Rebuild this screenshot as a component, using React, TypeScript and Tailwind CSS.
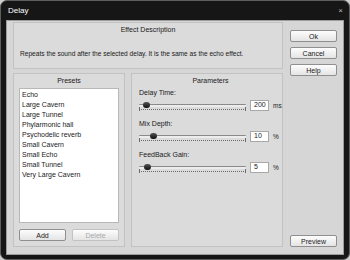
import React from "react";

const presets = [
  "Echo",
  "Large Cavern",
  "Large Tunnel",
  "Phylarmonic hall",
  "Psychodelic reverb",
  "Small Cavern",
  "Small Echo",
  "Small Tunnel",
  "Very Large Cavern",
];

const params = [
  { label: "Delay Time:", value: "200", unit: "ms", pos: 4 },
  { label: "Mix Depth:", value: "10", unit: "%", pos: 11 },
  { label: "FeedBack Gain:", value: "5", unit: "%", pos: 5 },
];

function Button({ children, disabled }: { children: React.ReactNode; disabled?: boolean }) {
  return (
    <button
      className={
        "flex h-[12px] w-full items-center justify-center rounded-[2px] border bg-gradient-to-b from-[#fdfdfd] to-[#e4e4e4] text-[7px] leading-none " +
        (disabled ? "border-[#c2c2c2] text-[#a9a9a9]" : "border-[#8f8f8f] text-[#1a1a1a]")
      }
    >
      {children}
    </button>
  );
}

function Slider({ pos }: { pos: number }) {
  return (
    <div className="relative h-[10px] w-[107px]">
      <div className="absolute left-0 right-0 top-[3px] h-[3px] rounded-[1px] border-t border-[#8a8a8a] bg-[#ececec]" />
      <div className="absolute left-0 right-0 top-[7px] h-[2px] border-b border-dotted border-[#6a6a6a]" />
      <div className="absolute left-0 top-[6px] h-[4px] w-px bg-[#6a6a6a]" />
      <div className="absolute right-0 top-[6px] h-[4px] w-px bg-[#6a6a6a]" />
      <div
        className="absolute top-[1px] h-[6px] w-[7px] rounded-full bg-gradient-to-b from-[#555] to-[#111]"
        style={{ left: pos }}
      />
    </div>
  );
}

export default function App() {
  return (
    <div
      className="h-[260px] w-[350px] bg-[#cfcfcf]"
      style={{ fontFamily: '"Liberation Sans", Arial, sans-serif' }}
    >
      <div className="flex h-full w-full flex-col rounded-[7px] border border-[#5e5e5e] bg-[#161616] px-[5px] pb-[4px]">
        <div className="flex h-[19px] items-center justify-between pl-[2px] pr-[1px]">
          <span className="text-[8px] text-white">Delay</span>
          <span className="text-[8px] leading-none text-[#bdbdbd]">×</span>
        </div>

        <div className="flex flex-1 gap-[7px] border border-[#9c9c9c] bg-[#d6d6d6] pl-[6px] pt-[1px]">
          <div className="flex w-[270px] flex-col gap-[4px] pb-[7px]">
            <div className="flex h-[47px] flex-col border border-[#c2c2c2] bg-[#dbdbdb]">
              <div className="pt-[2px] text-center text-[7px] text-[#1a1a1a]">Effect Description</div>
              <div className="pl-[6px] pt-[13px] text-[6.6px] text-[#1a1a1a]">
                Repeats the sound after the selected delay. It is the same as the echo effect.
              </div>
            </div>

            <div className="flex flex-1 gap-[6px]">
              <div className="flex w-[112px] flex-col border border-[#c2c2c2] bg-[#dbdbdb] px-[5px]">
                <div className="h-[14px] pt-[2px] text-center text-[7px] text-[#1a1a1a]">Presets</div>
                <div className="flex h-[135px] flex-col border border-[#b8b8b8] bg-white pl-[2px] pt-[1px]">
                  {presets.map((p) => (
                    <div key={p} className="h-[10px] text-[7px] leading-[10px] text-[#1a1a1a]">
                      {p}
                    </div>
                  ))}
                </div>
                <div className="mt-[6px] flex gap-[6px]">
                  <Button>Add</Button>
                  <Button disabled>Delete</Button>
                </div>
              </div>

              <div className="flex flex-1 flex-col border border-[#c2c2c2] bg-[#dbdbdb] pl-[7px]">
                <div className="h-[14px] pt-[2px] text-center text-[7px] text-[#1a1a1a]">Parameters</div>
                <div className="flex flex-col gap-[8px]">
                  {params.map((p) => (
                    <div key={p.label} className="flex flex-col gap-[3px]">
                      <div className="text-[7px] leading-[9px] text-[#1a1a1a]">{p.label}</div>
                      <div className="flex items-center">
                        <Slider pos={p.pos} />
                        <div className="ml-[4px] flex h-[11px] w-[19px] items-center border border-[#a8a8a8] bg-white pl-[3px] text-[7px] text-[#1a1a1a]">
                          {p.value}
                        </div>
                        <span className="ml-[4px] text-[6.5px] text-[#1a1a1a]">{p.unit}</span>
                      </div>
                    </div>
                  ))}
                </div>
              </div>
            </div>
          </div>

          <div className="flex w-[47px] flex-col pb-[7px] pt-[8px]">
            <div className="flex flex-col gap-[5px]">
              <Button>Ok</Button>
              <Button>Cancel</Button>
              <Button>Help</Button>
            </div>
            <div className="mt-auto">
              <Button>Preview</Button>
            </div>
          </div>
        </div>
      </div>
    </div>
  );
}
